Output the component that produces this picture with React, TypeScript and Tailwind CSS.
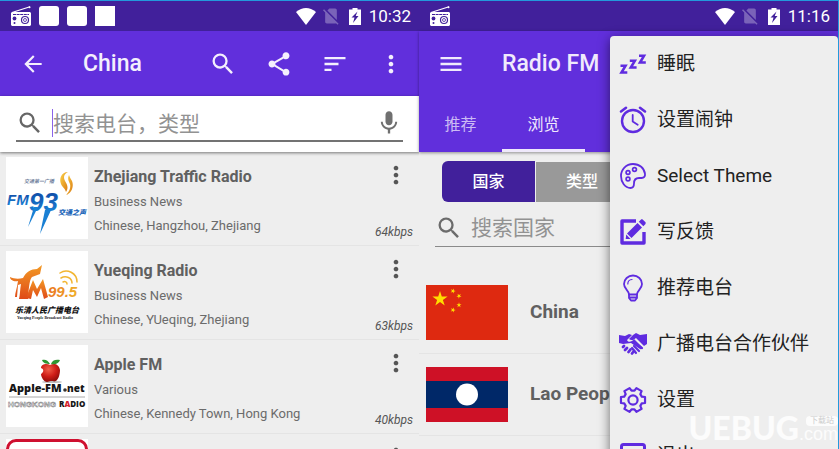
import type { ReactNode } from "react";
import {
  MdArrowBack,
  MdMenu,
  MdMic,
  MdMoreVert,
  MdSearch,
  MdShare,
  MdSignalCellularNoSim,
  MdSort,
} from "react-icons/md";

const CJK = "font-['Roboto','Noto_Sans_CJK_SC',sans-serif]";

const stations = [
  {
    name: "Zhejiang Traffic Radio",
    genre: "Business News",
    place: "Chinese, Hangzhou, Zhejiang",
    rate: "64kbps",
    logo: <TrafficLogo />,
  },
  {
    name: "Yueqing Radio",
    genre: "Business News",
    place: "Chinese, YUeqing, Zhejiang",
    rate: "63kbps",
    logo: <YueqingLogo />,
  },
  {
    name: "Apple FM",
    genre: "Various",
    place: "Chinese, Kennedy Town, Hong Kong",
    rate: "40kbps",
    logo: <AppleLogo />,
  },
  {
    name: "",
    genre: "",
    place: "",
    rate: "",
    logo: <div className="h-full rounded-[10px] border-[3px] border-[#cf1030] bg-white" />,
  },
];

const countries = [
  { name: "China", flag: <ChinaFlag /> },
  { name: "Lao People's Democratic Republic", flag: <LaosFlag /> },
  { name: "", flag: <div className="h-full bg-[#dde6f6]" /> },
];

const menu = [
  { label: "睡眠", icon: <SleepIcon /> },
  { label: "设置闹钟", icon: <AlarmIcon /> },
  { label: "Select Theme", icon: <PaletteIcon /> },
  { label: "写反馈", icon: <EditIcon /> },
  { label: "推荐电台", icon: <BulbIcon /> },
  { label: "广播电台合作伙伴", icon: <HandshakeIcon /> },
  { label: "设置", icon: <GearIcon /> },
  { label: "退出", icon: <ExitIcon /> },
];

/* ---------- station logos ---------- */

function TrafficLogo() {
  return (
    <svg viewBox="0 0 82 82" className="h-full w-full">
      <defs>
        <linearGradient id="blue" x1="0" y1="0" x2="0" y2="1">
          <stop offset="0" stopColor="#0d3f9c" />
          <stop offset="1" stopColor="#1d8fe0" />
        </linearGradient>
        <linearGradient id="gold" x1="0" y1="0" x2="1" y2="1">
          <stop offset="0" stopColor="#fbd34a" />
          <stop offset="1" stopColor="#d9780f" />
        </linearGradient>
      </defs>
      <text x="18" y="26" fontSize="5" fontStyle="italic" fontWeight="700" fill="#6f7f9d">
        交通第一广播
      </text>
      <text x="1" y="48" fontSize="15" fontStyle="italic" fontWeight="700" fontFamily="Liberation Sans" fill="url(#blue)">
        FM
      </text>
      <text x="23" y="54" fontSize="26" fontStyle="italic" fontWeight="700" fontFamily="Liberation Sans" fill="url(#blue)">
        93
      </text>
      <path d="M32 50 22 70 28 50zM46 51 34 77 39 53z" fill="#1a80d4" />
      <text x="52" y="58" fontSize="7" fontStyle="italic" fontWeight="900" fill="#1763b8">
        交通之声
      </text>
      <path d="M62 15c-7 0-9 7-7 12 1 3 4 4 5 8 3-4 1-8-1-11-2-4-1-7 3-9z" fill="url(#gold)" />
      <path d="M63 18c-2 4 0 6 1 9 1 4-1 8-4 11 6-2 8-9 6-14-1-2-2-3-3-6z" fill="url(#gold)" />
    </svg>
  );
}

function YueqingLogo() {
  return (
    <svg viewBox="0 0 82 82" className="h-full w-full">
      <defs>
        <linearGradient id="orange" x1="0" y1="0" x2="0" y2="1">
          <stop offset="0" stopColor="#f39a26" />
          <stop offset="1" stopColor="#df4a17" />
        </linearGradient>
        <linearGradient id="amber" x1="0" y1="0" x2="1" y2="0">
          <stop offset="0" stopColor="#ea7421" />
          <stop offset="1" stopColor="#efb02b" />
        </linearGradient>
      </defs>
      <path
        d="M4 26c4 2 9 2 13 1 3-6 8-9 14-9l5-4-2 9-8 3c-2 2-3 7-4 22h-9c1-4 1-10 2-15l-3 1-1 12H9c0-4 2-9 3-16-4 1-8-1-8-4z"
        fill="url(#orange)"
      />
      <path d="M20 47 27 29l4 9 6-10 5 18-4 2-3-11-4 9-4-7-2 9z" fill="url(#orange)" />
      <text x="42" y="46" fontSize="15" fontStyle="italic" fontWeight="700" fontFamily="Liberation Sans" fill="url(#amber)">
        99.5
      </text>
      <g fill="none" stroke="#f2b632" strokeLinecap="round" strokeWidth="1.5">
        <path d="M54 22c7-5 17 0 17 9" />
        <path d="M55 27c5-3 11 0 11 5" />
        <path d="M57 31c2-1 4 0 4 2" />
      </g>
      <text x="9" y="62" fontSize="8" fontStyle="italic" fontWeight="900" fill="#111">
        乐清人民广播电台
      </text>
      <text x="11" y="68" fontSize="4" fontWeight="700" fontFamily="Liberation Serif" fill="#222">
        Yueqing People Broadcast Radio
      </text>
    </svg>
  );
}

function AppleLogo() {
  return (
    <svg viewBox="0 0 82 82" className="h-full w-full">
      <defs>
        <radialGradient id="apple" cx="0.4" cy="0.3" r="0.8">
          <stop offset="0" stopColor="#f0604a" />
          <stop offset="0.5" stopColor="#cf1d17" />
          <stop offset="1" stopColor="#7c0907" />
        </radialGradient>
      </defs>
      <ellipse cx="46" cy="37" rx="10" ry="1" fill="#bbb" />
      <path
        d="M44 20c-3-2-9-1-9 3 3 1 3 4 0 6 0 3 3 8 6 8 2 0 2-1 4-1s3 1 5 0c3-2 4-8 4-11-1-6-6-7-10-5z"
        fill="url(#apple)"
      />
      <path d="M44 19c-2-4-5-5-8-4 1 3 4 4 8 4zM45 19c1-4 5-5 9-4-1 3-4 5-9 4z" fill="#2f9632" />
      <text x="3" y="47" fontSize="11" fontWeight="800" fontFamily="Open Sans" fill="#161616">
        Apple-FM
      </text>
      <circle cx="59" cy="45" r="1.8" fill="#333" />
      <text x="61" y="47" fontSize="10" fontWeight="800" fontFamily="Open Sans" fill="#161616">
        net
      </text>
      <path d="M3 52h76" stroke="#aaa" />
      <text x="2" y="62" fontSize="8" fontWeight="700" fontFamily="Liberation Sans" fill="#fff" stroke="#777" strokeWidth="0.5">
        HONGKONG
      </text>
      <text x="53" y="62" fontSize="8" fontWeight="800" fontFamily="Open Sans" fill="#161616">
        R<tspan fill="#d3202c">A</tspan>DIO
      </text>
    </svg>
  );
}

/* ---------- flags ---------- */

function star(cx: number, cy: number, r: number, turn = 0) {
  return Array.from({ length: 10 }, (_, i) => {
    const a = ((i * 36 - 90 + turn) * Math.PI) / 180;
    const d = i % 2 ? r * 0.38 : r;
    return `${(cx + d * Math.cos(a)).toFixed(2)},${(cy + d * Math.sin(a)).toFixed(2)}`;
  }).join(" ");
}

function ChinaFlag() {
  return (
    <svg viewBox="0 0 82 55" preserveAspectRatio="none" className="h-full w-full">
      <path d="M0 0h82v55H0z" fill="#de2910" />
      <g fill="#ffde00">
        <polygon points={star(14, 14, 8)} />
        <polygon points={star(27, 6, 2.7, 20)} />
        <polygon points={star(33, 11, 2.7, 40)} />
        <polygon points={star(33, 20, 2.7)} />
        <polygon points={star(27, 25, 2.7, 20)} />
      </g>
    </svg>
  );
}

function LaosFlag() {
  return (
    <svg viewBox="0 0 82 55" preserveAspectRatio="none" className="h-full w-full">
      <path d="M0 0h82v55H0z" fill="#ce1126" />
      <path d="M0 14h82v27H0z" fill="#002868" />
      <circle cx="41" cy="27.5" r="11" fill="#fff" />
    </svg>
  );
}

/* ---------- menu icons ---------- */

function Icon({ children }: { children: ReactNode }) {
  return (
    <svg
      viewBox="0 0 26 26"
      className="h-[26px] w-[26px] shrink-0 overflow-visible"
      fill="none"
      stroke="#5f2be0"
      strokeWidth="2"
      strokeLinecap="round"
      strokeLinejoin="round"
    >
      {children}
    </svg>
  );
}

function SleepIcon() {
  return (
    <Icon>
      <g strokeWidth="2.6" strokeLinecap="butt" strokeLinejoin="miter">
        <path d="M.5 14.800H5.500L1.500 21.500H7.300" />
        <path d="M9.800 9.800h5L10.800 16.500h5.800" />
        <path d="M19 4.800h5L20 11.500h5.800" />
      </g>
    </Icon>
  );
}

function AlarmIcon() {
  return (
    <Icon>
      <circle cx="13" cy="14" r="11" strokeWidth="2.4" />
      <path d="M12.700 8v6.600l5 3.200" strokeWidth="1.8" />
      <path d="M1 4.500 6 .8M25 4.500 20 .8" strokeWidth="2.6" />
    </Icon>
  );
}

function PaletteIcon() {
  return (
    <Icon>
      <path
        d="M13 1C6 1 1 6.500 1 13c0 6 4 12 9.500 12 3 0 3.500-2 3.500-4.500 0-4 1.500-5.500 5-5.500h2.500c2.500 0 3.800-1.500 3.500-4C24.300 5 19.500 1 13 1z"
        strokeWidth="1.8"
      />
      <g strokeWidth="1.7">
        <circle cx="8" cy="9.500" r="1.900" />
        <circle cx="14.500" cy="6.500" r="1.900" />
        <circle cx="8" cy="16" r="1.900" />
      </g>
    </Icon>
  );
}

function EditIcon() {
  return (
    <Icon>
      <path d="M16 2H2v22h22V13" strokeWidth="3.4" strokeLinecap="butt" />
      <g fill="#5f2be0" stroke="none">
        <path d="m17.500 4 4.500 4.500L11.500 19 7 14.500z" />
        <path d="M6.200 15.500 10.500 20H5.700z" />
        <path d="m18.800 2.700 2-2c.6-.6 1.500-.6 2.100 0l2.400 2.400c.6.6.6 1.500 0 2.100l-2 2z" />
      </g>
    </Icon>
  );
}

function BulbIcon() {
  return (
    <Icon>
      <g strokeWidth="1.8">
        <path d="M9 19.500c0-4-5-5.500-5-10.500a9 8.500 0 0 1 18 0c0 5-5 6.500-5 10.500z" />
        <path d="M9 19.500v3.500l2 2.500h4l2-2.500v-3.500M9.500 22.500h7" />
        <path d="M7.800 9c0-2.500 1.700-4.300 4.200-4.500" strokeWidth="1.2" />
      </g>
    </Icon>
  );
}

function HandshakeIcon() {
  return (
    <Icon>
      <g fill="#5f2be0" stroke="none">
        <path d="M-1 4 5 5l4-2 3 1-5 5c1 3 5 2 7-1l8 8c1 1 0 3-2 2l-9-6-8 1-4-1z" />
        <path d="m13 4 3-2 4 2 7-1v10l-3 2-8-8c-2 2-5 3-7 1z" />
      </g>
      <g strokeWidth="2.8">
        <path d="m4 15-1 1M7 17l-2 2M10.500 18.500l-2 2.500M14 20l-2 2.500" />
        <path d="m14 15 5 5M12 17l4 5M17 13l5 4" strokeWidth="2.2" />
      </g>
    </Icon>
  );
}

// six flat teeth, one pointing straight left and right
const gearPath =
  Array.from({ length: 6 }, (_, i) =>
    [
      [-21, 9.4],
      [-14, 12.4],
      [14, 12.4],
      [21, 9.4],
    ].map(([deg, r]) => {
      const a = ((i * 60 + deg) * Math.PI) / 180;
      return `${(13 + r * Math.cos(a)).toFixed(2)} ${(13 + r * Math.sin(a)).toFixed(2)}`;
    }),
  )
    .flat()
    .reduce((d, p) => (d ? `${d}L${p}` : `M${p}`), "") + "z";

function GearIcon() {
  return (
    <Icon>
      <path d={gearPath} strokeWidth="2.2" />
      <circle cx="13" cy="13" r="4.6" strokeWidth="2.2" />
    </Icon>
  );
}

function ExitIcon() {
  return (
    <Icon>
      <rect x="1.500" y="1.500" width="23" height="22" rx="2" strokeWidth="3" />
      <path d="M13 8v10M8 13h10" />
    </Icon>
  );
}

/* ---------- status bar ---------- */

function RadioIcon() {
  return (
    <svg viewBox="0 0 20 20" className="h-5 w-5">
      <path d="M1 6.500 19 .8" stroke="#fff" strokeWidth="1.2" />
      <circle cx="18.500" cy="1.200" r="1" fill="#fff" />
      <path d="M1 6h18l1 1v12l-1 1H1l-1-1V7z" fill="#fff" />
      <path d="M2 8.500h16" stroke="#41209b" strokeDasharray="3 .6" />
      <circle cx="14" cy="14" r="3.500" fill="none" stroke="#41209b" strokeWidth="1.2" />
      <circle cx="14" cy="14" r="1.500" fill="none" stroke="#41209b" strokeWidth="0.8" />
      <circle cx="3.500" cy="12.500" r="1.900" fill="#41209b" />
      <circle cx="3.500" cy="17" r="1" fill="#41209b" />
    </svg>
  );
}

function StatusBar({ time, children }: { time: string; children?: ReactNode }) {
  return (
    <div className="flex h-[30px] items-center gap-2 bg-[#41209b] pr-2 pl-[11px] text-white">
      <RadioIcon />
      {children}
      <div className="ml-auto flex items-center">
        <svg viewBox="0 0 20 17" className="h-[17px] w-5">
          <path d="M0 4Q10-4 20 4L10 17z" fill="#fff" />
        </svg>
        <MdSignalCellularNoSim className="ml-[5px] opacity-30" size={20} />
        <svg viewBox="0 0 12 17" className="ml-2 h-[17px] w-3">
          <path d="M3.500 0h5v1.500H12V17H0V1.500h3.500z" fill="#fff" />
          <path d="M8.500 3.500 2.500 9.500h3L4 15l5.500-7H6.700z" fill="#41209b" />
        </svg>
        <span className="ml-2 text-[17px] leading-5">{time}</span>
      </div>
    </div>
  );
}

function StationsPanel() {
  return (
    <section className="min-w-0 flex-1 bg-[#eee]">
      <StatusBar time="10:32">
        <span className="h-5 w-5 rounded-[3px] bg-white" />
        <span className="h-5 w-5 rounded-[3px] bg-white" />
        <span className="h-5 w-5 bg-white" />
      </StatusBar>
      <header className="flex h-[65px] items-center bg-[#612fdc] pl-5 text-[#f4effd]">
        <button aria-label="Back">
          <MdArrowBack size={26} />
        </button>
        <h1 className="ml-[37px] flex-1 pt-0.5 text-[23px] font-medium">China</h1>
        <button aria-label="Search" className="flex w-14 justify-center">
          <MdSearch size={28} />
        </button>
        <button aria-label="Share" className="flex w-14 justify-center">
          <MdShare size={28} />
        </button>
        <button aria-label="Sort" className="flex w-14 justify-center">
          <MdSort size={28} />
        </button>
        <button aria-label="More" className="flex w-14 justify-center">
          <MdMoreVert size={28} />
        </button>
      </header>
      <div className="relative h-14 bg-white px-4 shadow-[0_1px_3px_rgba(0,0,0,0.5)]">
        <label className="flex h-[46px] items-end border-b-2 border-[#737373] pb-[3px]">
          <MdSearch size={28} className="shrink-0 text-[#666]" />
          <span className="ml-2 h-7 w-px bg-[#8a63ea]" />
          <input
            type="text"
            placeholder="搜索电台，类型"
            className="h-7 min-w-0 flex-1 pt-1 text-[21px] outline-none placeholder:text-[#929292]"
          />
          <MdMic size={28} className="text-[#707070]" />
        </label>
      </div>
      <ul>
        {stations.map((s, i) => (
          <li key={i} className="flex border-b border-[#e4e4e4] pt-[5px] pr-1.5 pb-1.5 pl-1.5">
            <div className="h-[82px] w-[82px] shrink-0 bg-white">{s.logo}</div>
            <div className="min-w-0 flex-1 pt-[7px] pl-1.5 text-[13px] leading-6 whitespace-nowrap text-[#6b6b6b]">
              <h2 className="text-base leading-[26px] font-bold text-[#606060]">{s.name}</h2>
              <p>{s.genre}</p>
              <p>{s.place}</p>
            </div>
            <div className="flex flex-col items-end justify-between pt-1">
              <button aria-label="Station options" className="mr-[3px] text-[#555]">
                <MdMoreVert size={28} />
              </button>
              <span className="text-xs leading-[14px] text-[#555] italic">{s.rate}</span>
            </div>
          </li>
        ))}
      </ul>
    </section>
  );
}

function BrowsePanel() {
  return (
    <section className="relative min-w-0 flex-1 bg-[#eee]">
      <StatusBar time="11:16" />
      <header className="relative bg-[#612fdc] shadow-[0_1px_3px_rgba(0,0,0,0.4)]">
        <div className="flex h-[65px] items-center pl-[18px] text-[#f0eafc]">
          <button aria-label="Menu">
            <MdMenu size={28} />
          </button>
          <h1 className="ml-[37px] pt-0.5 text-[23px] font-medium">Radio FM</h1>
        </div>
        <nav className="flex h-14 text-base">
          <button className="w-[83px] border-b-[3px] border-transparent pt-1 text-[#cbbaf4]">推荐</button>
          <button className="w-[83px] border-b-[3px] border-[#efe9fb] pt-1 text-[#f0eafc]">浏览</button>
        </nav>
      </header>
      <div className="flex h-[50px] items-end pl-[23px] text-base text-white">
        <button className="h-[41px] w-[93px] rounded-l-md bg-[#41209b] font-medium">国家</button>
        <button className="ml-px h-10 w-[92px] bg-[#999] font-medium">类型</button>
      </div>
      <label className="mx-4 flex h-[45px] items-end border-b border-[#8a8a8a] pb-1">
        <MdSearch size={28} className="shrink-0 text-[#6b6b6b]" />
        <input
          type="text"
          placeholder="搜索国家"
          className="ml-2 h-7 min-w-0 flex-1 pt-0.5 text-[21px] outline-none placeholder:text-[#929292]"
        />
      </label>
      <ul className="pt-[25px]">
        {countries.map((c, i) => (
          <li key={i} className="flex items-center border-b border-[#e4e4e4] py-[13px] pl-[7px]">
            <div className="h-[55px] w-[82px] shrink-0">{c.flag}</div>
            <span className="ml-[22px] truncate text-[19px] font-bold text-[#606060]">{c.name}</span>
          </li>
        ))}
      </ul>
      <div
        role="menu"
        className="absolute top-[35px] right-0 w-[228px] rounded-sm bg-[#eee] shadow-[0_3px_12px_rgba(0,0,0,0.55)]"
      >
        {menu.map(m => (
          <button
            key={m.label}
            role="menuitem"
            className="flex h-14 w-full items-center gap-[11px] pl-2.5 text-left text-[19px] text-[#222]"
          >
            {m.icon}
            {m.label}
          </button>
        ))}
      </div>
      <Watermark />
    </section>
  );
}

function Watermark() {
  return (
    <div className="absolute top-[413px] right-0 flex items-end text-white/80">
      <span className="font-['Lato',sans-serif] text-[32px] leading-7 font-black">UEBUG</span>
      <span className="flex flex-col items-end">
        <span className="rounded-sm bg-white/80 px-1 text-[8px] leading-[10px] text-[#ccc]">下载站</span>
        <span className="font-['Liberation_Sans',sans-serif] text-[18px] leading-4">.com</span>
      </span>
    </div>
  );
}

export default function App() {
  return (
    <main
      className={`flex h-screen overflow-hidden border-t border-r border-[#2399dc] ${CJK}`}
    >
      <StationsPanel />
      <BrowsePanel />
    </main>
  );
}
